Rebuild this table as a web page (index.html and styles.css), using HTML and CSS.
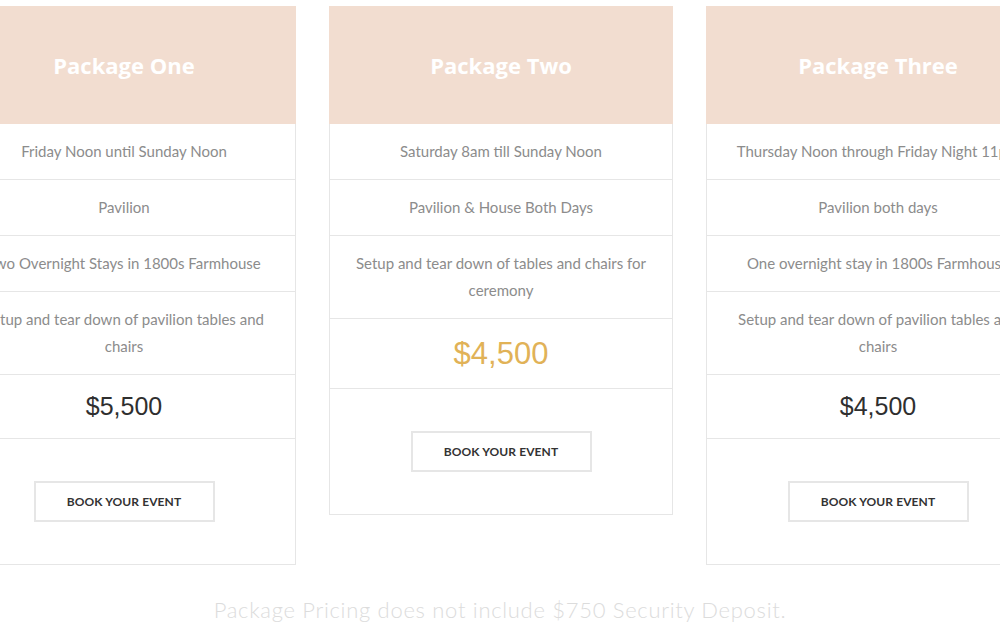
FILE: index.html
```html
<!DOCTYPE html>
<html>
<head>
<meta charset="utf-8">
<link rel="stylesheet" href="styles.css">
</head>
<body>
<div class="page">
  <div class="cards">
    <div class="card">
      <div class="card-head"><h2>Package One</h2></div>
      <div class="row">Friday Noon until Sunday Noon</div>
      <div class="row">Pavilion</div>
      <div class="row">Two Overnight Stays in 1800s Farmhouse</div>
      <div class="row">Setup and tear down of pavilion tables and chairs</div>
      <div class="price">$5,500</div>
      <div class="action"><a class="btn">BOOK YOUR EVENT</a></div>
    </div>
    <div class="card featured">
      <div class="card-head"><h2>Package Two</h2></div>
      <div class="row">Saturday 8am till Sunday Noon</div>
      <div class="row">Pavilion &amp; House Both Days</div>
      <div class="row">Setup and tear down of tables and chairs for ceremony</div>
      <div class="price">$4,500</div>
      <div class="action"><a class="btn">BOOK YOUR EVENT</a></div>
    </div>
    <div class="card">
      <div class="card-head"><h2>Package Three</h2></div>
      <div class="row">Thursday Noon through Friday Night 11pm</div>
      <div class="row">Pavilion both days</div>
      <div class="row">One overnight stay in 1800s Farmhouse</div>
      <div class="row">Setup and tear down of pavilion tables and chairs</div>
      <div class="price">$4,500</div>
      <div class="action"><a class="btn">BOOK YOUR EVENT</a></div>
    </div>
  </div>
  <p class="note">Package Pricing does not include $750 Security Deposit.</p>
</div>
</body>
</html>
```

FILE: styles.css
```css
html, body {
  margin: 0;
  padding: 0;
  background: #fff;
}
.page {
  width: 1000px;
  height: 627px;
  overflow: hidden;
  padding-top: 6px;
  box-sizing: border-box;
}
.cards {
  display: flex;
  justify-content: center;
  align-items: flex-start;
  gap: 33px;
  width: 1098px;
  margin-left: -48px;
}
.card {
  width: 344px;
  flex: 0 0 344px;
  box-sizing: border-box;
  border: 1px solid #e6e6e6;
  border-top: none;
  background: #fff;
}
.card-head {
  height: 118px;
  background: #f2ddd0;
  display: flex;
  align-items: center;
  justify-content: center;
  margin: 0 -1px;
}
.card-head h2 {
  margin: 0;
  font-family: "Open Sans", "Noto Sans", sans-serif;
  font-weight: 700;
  font-size: 22px;
  color: #fff;
  letter-spacing: 0;
}
.row {
  padding: 14px 22px;
  border-bottom: 1px solid #e6e6e6;
  text-align: center;
  font-family: "Lato", "Open Sans", sans-serif;
  font-size: 15px;
  line-height: 27px;
  color: #8c8c8c;
}
.price {
  height: 63px;
  border-bottom: 1px solid #e6e6e6;
  display: flex;
  align-items: center;
  justify-content: center;
  font-family: "Liberation Sans", Arial, sans-serif;
  font-size: 25px;
  color: #2f2f2f;
}
.featured .price {
  height: 69px;
  font-size: 31px;
  color: #e1b257;
}
.action {
  padding: 42px 0 42px;
  display: flex;
  justify-content: center;
}
.btn {
  width: 181px;
  height: 41px;
  box-sizing: border-box;
  border: 2px solid #e6e6e6;
  display: flex;
  align-items: center;
  justify-content: center;
  font-family: "Lato", "Open Sans", sans-serif;
  font-weight: 700;
  font-size: 12px;
  letter-spacing: 0.1px;
  color: #333;
}
.note {
  margin: 31px 0 0;
  text-align: center;
  font-family: "Lato", "Open Sans", sans-serif;
  font-weight: 300;
  font-size: 22px;
  letter-spacing: 0.7px;
  color: #dcdcdc;
}
```
